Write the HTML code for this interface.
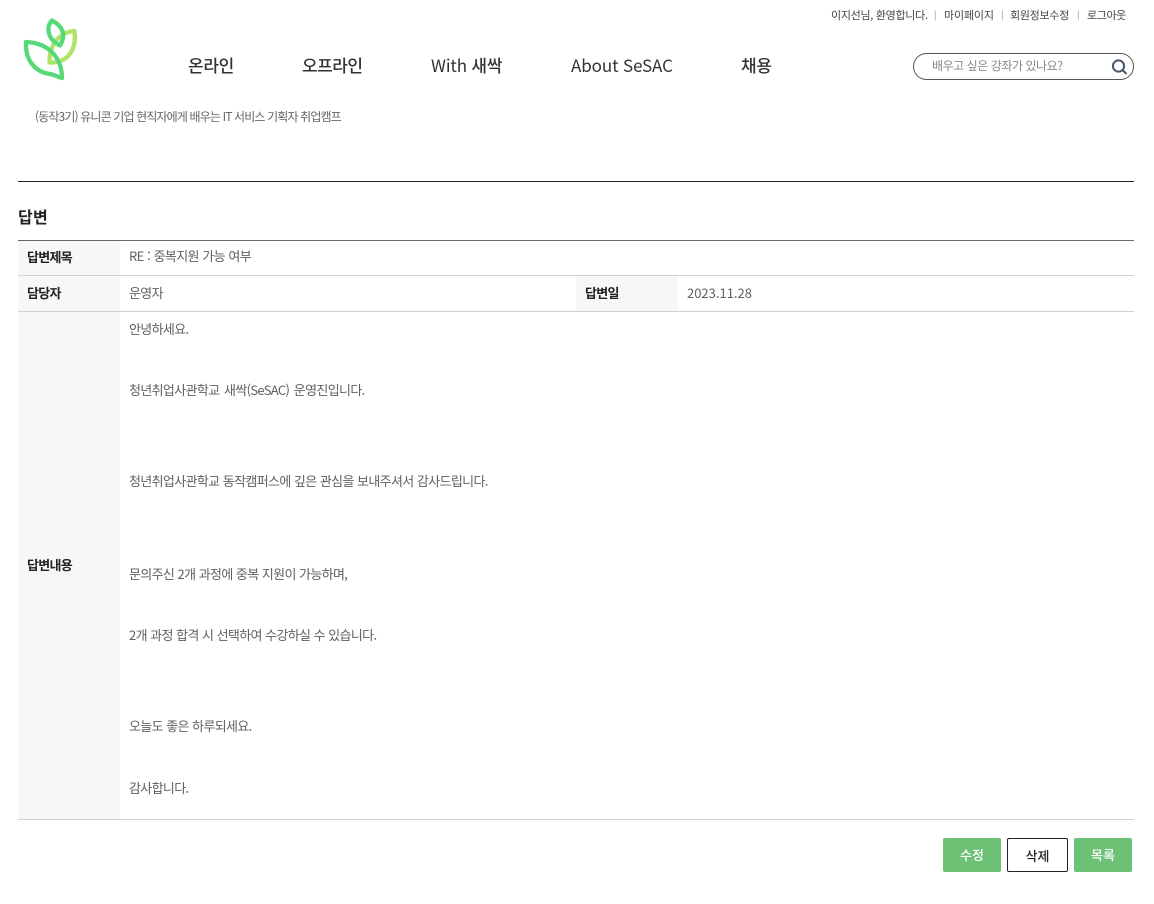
<!DOCTYPE html>
<html lang="ko">
<head>
<meta charset="utf-8">
<title>답변</title>
<style>
html,body{margin:0;padding:0;background:#fff}
body{width:1154px;height:904px;position:relative;overflow:hidden;font-family:"Noto Sans CJK KR",sans-serif;color:#555}
.t{position:absolute;white-space:nowrap;line-height:20px}
.top{font-size:11px;color:#444;top:5px;letter-spacing:-.15px}
.sep{font-size:9px;color:#888;top:5px}
.nav{font-size:17px;color:#333;top:55px;font-weight:500;letter-spacing:-.3px}
.nav span{font-weight:400;letter-spacing:-.1px}
.r{position:absolute;left:18px;width:1116px;height:1px;background:#d0d0d0}
.bg{position:absolute;background:#f7f7f7}
.h{font-size:13px;font-weight:700;color:#222;letter-spacing:-.7px}
.c{font-size:13px;color:#606060;left:129px;letter-spacing:-.65px;word-spacing:.3px}
.btn{position:absolute;top:838px;height:34px;line-height:33px;text-align:center;font-size:13px;font-weight:500;border-radius:2px;box-sizing:border-box}
</style>
</head>
<body>
<svg style="position:absolute;left:0;top:0" width="120" height="100" viewBox="0 0 120 100" fill="none" stroke-linejoin="round" stroke-linecap="round">
<path d="M74.500 31C62 32 49 42 49.500 62.500C66 63 77 52 74.500 31Z" stroke="#b0e466" stroke-width="4.300"/>
<path d="M52 20.500C46 27 47 39 60 45.500C66 36 64 27 52 20.500Z" stroke="#58d978" stroke-width="4.300"/>
<path d="M26 42C25 60 35 72 50 74C55 75 58 77 62 78C62 60 51 43 26 42Z" stroke="#58d978" stroke-width="4.300"/>
</svg>

<div class="t top" style="left:831px;letter-spacing:-.3px">이지선님, 환영합니다.</div>
<div class="t sep" style="left:934px">|</div>
<div class="t top" style="left:944px">마이페이지</div>
<div class="t sep" style="left:1001px">|</div>
<div class="t top" style="left:1010px;letter-spacing:-.3px">회원정보수정</div>
<div class="t sep" style="left:1077px">|</div>
<div class="t top" style="left:1087px;letter-spacing:-.4px">로그아웃</div>

<div class="t nav" style="left:188px">온라인</div>
<div class="t nav" style="left:302px;letter-spacing:-.5px">오프라인</div>
<div class="t nav" style="left:431px"><span>With</span> 새싹</div>
<div class="t nav" style="left:571px"><span>About SeSAC</span></div>
<div class="t nav" style="left:741px">채용</div>

<div style="position:absolute;left:913px;top:53px;width:221px;height:27px;box-sizing:border-box;border:1px solid #555;border-radius:14px"></div>
<div class="t" style="left:932px;top:56px;font-size:12px;color:#888;letter-spacing:-.45px">배우고 싶은 강좌가 있나요?</div>
<svg style="position:absolute;left:1110px;top:58px" width="18" height="18" viewBox="0 0 18 18" fill="none">
<circle cx="8.500" cy="8" r="5.600" stroke="#46566e" stroke-width="2"/>
<path d="M12.600 12.100L16 15.500" stroke="#46566e" stroke-width="2" stroke-linecap="round"/>
</svg>

<div class="t" style="left:35px;top:107px;font-size:12px;color:#666;letter-spacing:-.86px">(동작3기) 유니콘 기업 현직자에게 배우는 IT 서비스 기획자 취업캠프</div>

<div style="position:absolute;left:18px;top:181px;width:1116px;height:1px;background:#222"></div>
<div class="t" style="left:18px;top:206px;font-size:16px;font-weight:700;color:#222;letter-spacing:.3px">답변</div>

<div class="bg" style="left:18px;top:241px;width:102px;height:578px"></div>
<div class="bg" style="left:576px;top:276px;width:102px;height:35px"></div>

<div class="r" style="top:240px;background:#666"></div>
<div class="r" style="top:275px"></div>
<div class="r" style="top:311px"></div>
<div class="r" style="top:819px"></div>

<div class="t h" style="left:27px;top:247px">답변제목</div>
<div class="t c" style="top:246px;word-spacing:.5px">RE : 중복지원 가능 여부</div>
<div class="t h" style="left:27px;top:283px">담당자</div>
<div class="t c" style="top:283px">운영자</div>
<div class="t h" style="left:585px;top:283px">답변일</div>
<div class="t c" style="left:687px;top:283px;letter-spacing:0">2023.11.28</div>
<div class="t h" style="left:27px;top:555px">답변내용</div>

<div class="t c" style="top:319px">안녕하세요.</div>
<div class="t c" style="top:380px;word-spacing:1.500px">청년취업사관학교 새싹(SeSAC) 운영진입니다.</div>
<div class="t c" style="top:471px">청년취업사관학교 동작캠퍼스에 깊은 관심을 보내주셔서 감사드립니다.</div>
<div class="t c" style="top:564px">문의주신 2개 과정에 중복 지원이 가능하며,</div>
<div class="t c" style="top:625px">2개 과정 합격 시 선택하여 수강하실 수 있습니다.</div>
<div class="t c" style="top:716px">오늘도 좋은 하루되세요.</div>
<div class="t c" style="top:778px">감사합니다.</div>

<div class="btn" style="left:943px;width:58px;background:#6cc175;color:#fff">수정</div>
<div class="btn" style="left:1007px;width:61px;background:#fff;color:#222;border:1px solid #222">삭제</div>
<div class="btn" style="left:1074px;width:58px;background:#6cc175;color:#fff">목록</div>
</body>
</html>
